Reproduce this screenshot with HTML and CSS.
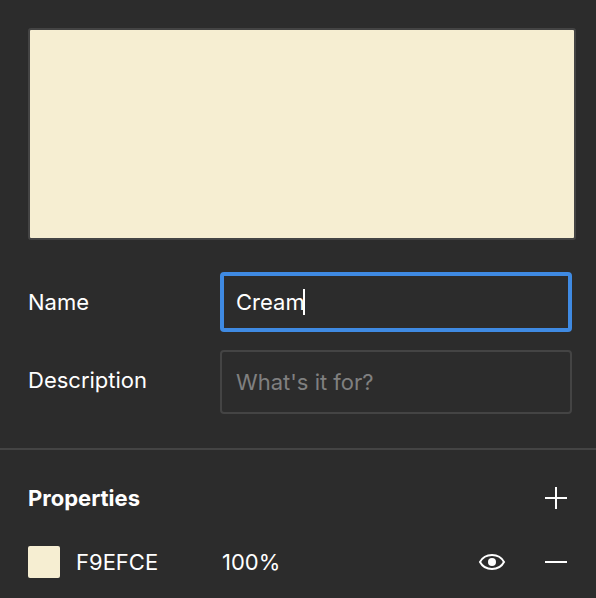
FILE: index.html
```html
<!DOCTYPE html>
<html lang="en">
<head>
<meta charset="utf-8">
<meta name="viewport" content="width=device-width, initial-scale=1">
<title>Color style</title>
<link rel="stylesheet" href="styles.css">
</head>
<body>
<main class="panel">
  <form class="details">
    <div class="preview"></div>
    <div class="field">
      <label class="label" for="name">Name</label>
      <div class="control">
        <input class="input input-active" id="name" type="text" value="Cream">
        <span class="caret"></span>
      </div>
    </div>
    <div class="field">
      <label class="label" for="description">Description</label>
      <div class="control">
        <input class="input" id="description" type="text" placeholder="What's it for?">
      </div>
    </div>
  </form>
  <section class="properties">
    <header class="row">
      <h2 class="title">Properties</h2>
      <button class="icon-button" type="button" aria-label="Add property">
        <svg width="32" height="32" viewBox="0 0 32 32"><path d="M5 16h22M16 5v22"/></svg>
      </button>
    </header>
    <div class="row">
      <button class="swatch" type="button" aria-label="Edit color"></button>
      <span class="hex">F9EFCE</span>
      <span class="opacity">100%</span>
      <button class="icon-button" type="button" aria-label="Toggle visibility">
        <svg width="32" height="32" viewBox="0 0 32 32"><path d="M4 16C6.400 11.500 10.700 9 16 9s9.600 2.500 12 7c-2.400 4.500-6.700 7-12 7S6.400 20.500 4 16z"/><circle class="pupil" cx="16" cy="16" r="4"/></svg>
      </button>
      <button class="icon-button" type="button" aria-label="Remove property">
        <svg width="32" height="32" viewBox="0 0 32 32"><path d="M5 16h22"/></svg>
      </button>
    </div>
  </section>
</main>
</body>
</html>
```
FILE: styles.css
```css
* {
  box-sizing: border-box;
}

body {
  margin: 0;
  background: #2c2c2c;
  color: #fff;
  font: 22px/32px Inter, "Liberation Sans", sans-serif;
}

button {
  padding: 0;
  border: 0;
  background: none;
  color: inherit;
}

.details {
  padding: 28px 24px 34px 28px;
  border-bottom: 2px solid #444;
}

.preview {
  height: 212px;
  margin: 0 -4px 32px 0;
  border: 2px solid #444;
  border-radius: 3px;
  background: #f6eed2;
}

.field {
  display: grid;
  grid-template-columns: 192px 1fr;
}

.field + .field {
  margin-top: 18px;
}

.label {
  padding-top: 14px;
}

.control {
  position: relative;
  display: flex;
}

.input {
  width: 100%;
  height: 64px;
  padding: 0 14px;
  border: 2px solid #444;
  border-radius: 4px;
  outline: 0;
  background: transparent;
  color: inherit;
  font: inherit;
}

.input-active {
  height: 60px;
  padding: 0 12px;
  border: 4px solid #3f8ae2;
}

.input::placeholder {
  color: #808080;
  opacity: 1;
}

.caret {
  position: absolute;
  top: 17px;
  left: 83px;
  width: 2px;
  height: 26px;
  background: #fff;
}

.properties {
  padding: 32px 24px 20px 28px;
}

.row {
  display: flex;
  align-items: center;
  gap: 32px;
}

.row + .row {
  margin-top: 32px;
}

.title {
  flex: 1;
  margin: 0;
  font-size: 22px;
  font-weight: 700;
}

.swatch {
  width: 32px;
  height: 32px;
  border-radius: 2px;
  background: #f6eed2;
}

.hex {
  width: 114px;
  margin-left: -16px;
}

.opacity {
  flex: 1;
}

.icon-button {
  width: 32px;
  height: 32px;
}

.icon-button svg {
  display: block;
  fill: none;
  stroke: #fff;
  stroke-width: 2;
}

.icon-button .pupil {
  fill: #fff;
  stroke: none;
}
```
